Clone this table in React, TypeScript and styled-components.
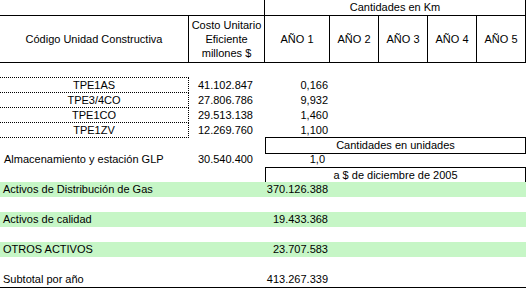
import React from "react";
import styled, { createGlobalStyle, css } from "styled-components";

const Global = createGlobalStyle`
  html, body { margin: 0; padding: 0; background: #fff; }
  body { font-family: "Liberation Sans", Arial, sans-serif; font-size: 11px; color: #000; }
`;

const COLS = "189px 76px 65px 49px 49px 49px 49px";
const LINE = "1px solid #000";
const DOT = "1px dotted #000";

const Sheet = styled.div`
  width: 526px;
  display: flex;
  flex-direction: column;
`;

const Row = styled.div<{ $h?: number; $top?: boolean; $bottom?: boolean; $bg?: string }>`
  display: grid;
  grid-template-columns: ${COLS};
  height: ${(p) => p.$h ?? 15}px;
  box-sizing: border-box;
  background: ${(p) => p.$bg ?? "transparent"};
  ${(p) => p.$top && css`border-top: ${LINE};`}
  ${(p) => p.$bottom && css`border-bottom: ${LINE};`}
`;

type CellProps = {
  $span?: number;
  $align?: "left" | "center" | "right";
  $pr?: number;
  $pl?: number;
  $right?: boolean;
  $box?: boolean;
  $dotted?: boolean;
};

const Cell = styled.div<CellProps>`
  grid-column: span ${(p) => p.$span ?? 1};
  box-sizing: border-box;
  display: flex;
  align-items: center;
  justify-content: ${(p) =>
    p.$align === "right" ? "flex-end" : p.$align === "center" ? "center" : "flex-start"};
  padding-right: ${(p) => p.$pr ?? 0}px;
  padding-left: ${(p) => p.$pl ?? 0}px;
  white-space: nowrap;
  line-height: 15px;
  ${(p) => p.$right && css`border-right: ${LINE};`}
  ${(p) => p.$box && css`border: ${LINE};`}
  ${(p) =>
    p.$dotted &&
    css`
      border-top: ${DOT};
      border-right: ${DOT};
    `}
`;

const HeadCell = styled(Cell)`
  flex-direction: column;
  justify-content: center;
  align-items: center;
  text-align: center;
  line-height: 14px;
`;

const DotLine = styled.div`
  grid-column: span 1;
  border-top: ${DOT};
`;

const units = [
  { code: "TPE1AS", cost: "41.102.847", km: "0,166" },
  { code: "TPE3/4CO", cost: "27.806.786", km: "9,932" },
  { code: "TPE1CO", cost: "29.513.138", km: "1,460" },
  { code: "TPE1ZV", cost: "12.269.760", km: "1,100" },
];

const totals = [
  { label: "Activos de Distribución de Gas", value: "370.126.388" },
  { label: "Activos de calidad", value: "19.433.368" },
  { label: "OTROS ACTIVOS", value: "23.707.583" },
];

export default function App() {
  return (
    <>
      <Global />
      <Sheet>
        <Row $h={15}>
          <Cell $span={2} $right />
          <Cell $span={5} $align="center" $right>
            Cantidades en Km
          </Cell>
        </Row>
        <Row $h={48} $top $bottom>
          <HeadCell $right>Código Unidad Constructiva</HeadCell>
          <HeadCell $right>
            <span>Costo Unitario</span>
            <span>Eficiente</span>
            <span>millones $</span>
          </HeadCell>
          {[1, 2, 3, 4, 5].map((n) => (
            <HeadCell key={n} $right>
              AÑO {n}
            </HeadCell>
          ))}
        </Row>
        <Row $h={14} />
        {units.map((u) => (
          <Row key={u.code}>
            <Cell $dotted $align="center">
              {u.code}
            </Cell>
            <Cell $align="right" $pr={12}>
              {u.cost}
            </Cell>
            <Cell $align="right" $pr={2}>
              {u.km}
            </Cell>
          </Row>
        ))}
        <Row $h={0}>
          <DotLine />
        </Row>
        <Row>
          <Cell />
          <Cell />
          <Cell $span={5} $box $align="center">
            Cantidades en unidades
          </Cell>
        </Row>
        <Row>
          <Cell $pl={4}>Almacenamiento y estación GLP</Cell>
          <Cell $align="right" $pr={12}>
            30.540.400
          </Cell>
          <Cell $align="right" $pr={5}>
            1,0
          </Cell>
        </Row>
        <Row>
          <Cell />
          <Cell />
          <Cell $span={5} $box $align="center">
            a $ de diciembre de 2005
          </Cell>
        </Row>
        {totals.map((t) => (
          <React.Fragment key={t.label}>
            <Row $bg="#c6f6c6">
              <Cell $pl={3}>{t.label}</Cell>
              <Cell />
              <Cell $align="right" $pr={2}>
                {t.value}
              </Cell>
            </Row>
            <Row />
          </React.Fragment>
        ))}
        <Row $h={16} $bottom>
          <Cell $pl={3}>Subtotal por año</Cell>
          <Cell />
          <Cell $align="right" $pr={2}>
            413.267.339
          </Cell>
        </Row>
      </Sheet>
    </>
  );
}
